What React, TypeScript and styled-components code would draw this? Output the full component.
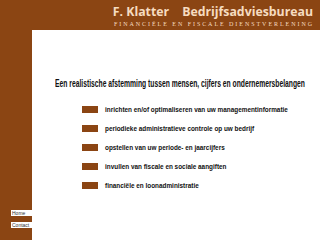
import React from 'react';
import styled, { createGlobalStyle } from 'styled-components';

const GlobalStyle = createGlobalStyle`
  html, body {
    margin: 0;
    padding: 0;
    background: #8b4513;
  }
`;

const services = [
  'inrichten en/of optimaliseren van uw managementinformatie',
  'periodieke administratieve controle op uw bedrijf',
  'opstellen van uw periode- en jaarcijfers',
  'invullen van fiscale en sociale aangiften',
  'financiële en loonadministratie',
];

const App = () => {
  return (
    <>
      <GlobalStyle />
      <Page>
        <Header>
          <Brand>
            <span>F. Klatter</span>
            <span>Bedrijfsadviesbureau</span>
          </Brand>
          <Tagline>Financiële en fiscale dienstverlening</Tagline>
        </Header>
        <Sidebar>
          <NavLink href="#">Home</NavLink>
          <NavLink href="#">Contact</NavLink>
        </Sidebar>
        <Main>
          <Slogan>
            <span>Een realistische afstemming tussen mensen, cijfers en ondernemersbelangen</span>
          </Slogan>
          <ServiceList>
            {services.map((s) => (
              <ServiceItem key={s}>
                <Marker />
                {s}
              </ServiceItem>
            ))}
          </ServiceList>
        </Main>
      </Page>
    </>
  );
};

export default App;

const Page = styled.div`
  width: 320px;
  height: 240px;
  overflow: hidden;
  display: grid;
  grid-template-columns: 32px minmax(0, 1fr);
  grid-template-rows: 30px minmax(0, 1fr);
  background: #8b4513;
`;

const Header = styled.div`
  grid-column: 1 / -1;
  min-width: 0;
  display: flex;
  flex-direction: column;
  align-items: flex-end;
  padding: 4px 7px 0 0;
  color: #f6dcc0;
`;

const Brand = styled.div`
  display: flex;
  gap: 13px;
  font-family: 'Open Sans', 'Liberation Sans', sans-serif;
  font-weight: bold;
  font-size: 12.3px;
  line-height: 15px;
  white-space: nowrap;
`;

const Tagline = styled.div`
  margin-top: 2px;
  font-family: 'Liberation Serif', serif;
  font-size: 6px;
  line-height: 7px;
  text-transform: uppercase;
  letter-spacing: 1.95px;
  margin-right: -1px;
  white-space: nowrap;
`;

const Sidebar = styled.div`
  display: flex;
  flex-direction: column;
  align-items: flex-end;
  justify-content: flex-end;
  gap: 6px;
  padding-bottom: 12px;
`;

const NavLink = styled.a`
  display: block;
  width: 20px;
  height: 6px;
  padding-left: 1px;
  background: #fff;
  color: #333;
  font-family: 'Liberation Sans', sans-serif;
  font-size: 5px;
  line-height: 6px;
  text-decoration: none;
`;

const Main = styled.div`
  min-width: 0;
  background: #fff;
  padding: 47px 0 0 23px;
`;

const Slogan = styled.h1`
  margin: 0;
  height: 13px;
  font-family: 'Liberation Sans', sans-serif;
  font-weight: bold;
  font-size: 11px;
  line-height: 13px;
  color: #111;
  white-space: nowrap;

  span {
    display: inline-block;
    transform: scaleX(0.614);
    transform-origin: left center;
  }
`;

const ServiceList = styled.ul`
  list-style: none;
  margin: 16px 0 0 27px;
  padding: 0;
  display: flex;
  flex-direction: column;
  gap: 12px;
`;

const ServiceItem = styled.li`
  display: flex;
  align-items: center;
  gap: 7px;
  height: 7px;
  font-family: 'Liberation Sans', sans-serif;
  font-weight: bold;
  font-size: 6.4px;
  color: #111;
  white-space: nowrap;
`;

const Marker = styled.span`
  width: 16px;
  height: 7px;
  background: #8b4513;
  flex-shrink: 0;
`;
